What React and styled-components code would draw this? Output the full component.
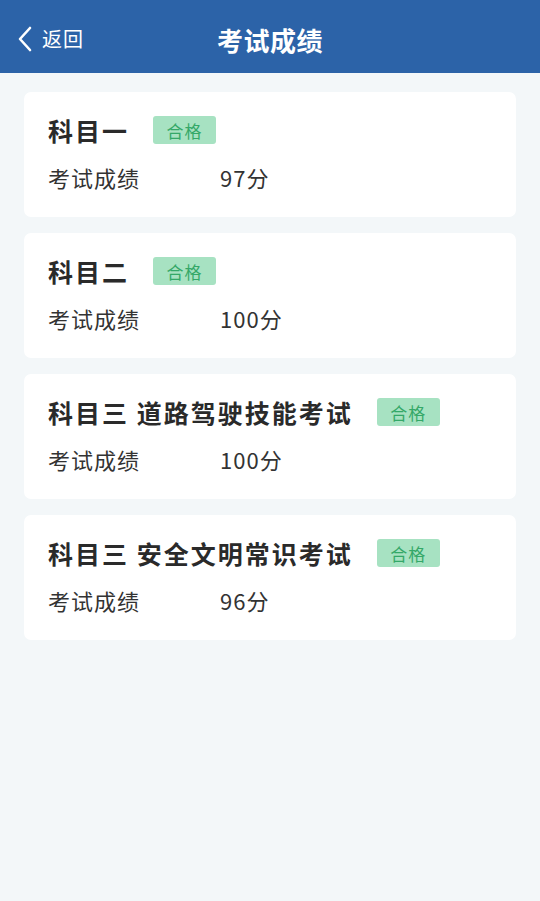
import React from "react";
import styled, { createGlobalStyle } from "styled-components";

const Global = createGlobalStyle`
  html, body { margin: 0; padding: 0; background: #f3f7f9; }
  body { font-family: "Noto Sans CJK SC", "Noto Sans", sans-serif; }
  * { box-sizing: border-box; }
`;

const Page = styled.div`
  width: 540px;
  min-height: 901px;
  background: #f3f7f9;
`;

const Header = styled.header`
  height: 73px;
  padding-top: 5px;
  background: #2c63a8;
  display: grid;
  grid-template-columns: 1fr auto 1fr;
  align-items: center;
  color: #fff;
`;

const Back = styled.div`
  display: flex;
  align-items: center;
  gap: 9px;
  padding-left: 17px;
  font-size: 20px;
  line-height: 1;
  letter-spacing: 1px;
`;

const Title = styled.h1`
  margin: 0;
  font-size: 26px;
  font-weight: 700;
  letter-spacing: 0.5px;
`;

const List = styled.main`
  display: flex;
  flex-direction: column;
  gap: 16px;
  padding: 19px 24px;
`;

const Card = styled.section`
  background: #fff;
  border-radius: 7px;
  height: 125px;
  padding: 20px 24px 0;
  display: flex;
  flex-direction: column;
  gap: 14px;
`;

const TitleRow = styled.div`
  display: flex;
  align-items: center;
  height: 36px;
  gap: 24px;
`;

const Subject = styled.div`
  font-size: 25px;
  font-weight: 700;
  color: #2a2a2a;
  letter-spacing: 2px;
`;

const Badge = styled.span`
  display: inline-flex;
  align-items: center;
  justify-content: center;
  width: 63px;
  height: 28px;
  border-radius: 3px;
  background: #a7e2c2;
  color: #34a868;
  font-size: 17px;
  letter-spacing: 1px;
`;

const InfoRow = styled.div`
  display: flex;
  align-items: center;
  font-size: 22px;
  letter-spacing: 1px;
  color: #333;
  height: 30px;
`;

const Label = styled.span`
  width: 172px;
`;

const Value = styled.span``;

const data = [
  { name: "科目一", score: "97分" },
  { name: "科目二", score: "100分" },
  { name: "科目三 道路驾驶技能考试", score: "100分" },
  { name: "科目三 安全文明常识考试", score: "96分" },
];

export default function App() {
  return (
    <Page>
      <Global />
      <Header>
        <Back>
          <svg width="16" height="26" viewBox="0 0 16 26" fill="none">
            <path d="M13 2 L3 13 L13 24" stroke="#fff" strokeWidth="2.6" strokeLinecap="round" strokeLinejoin="round" />
          </svg>
          <span>返回</span>
        </Back>
        <Title>考试成绩</Title>
        <div />
      </Header>
      <List>
        {data.map((d) => (
          <Card key={d.name}>
            <TitleRow>
              <Subject>{d.name}</Subject>
              <Badge>合格</Badge>
            </TitleRow>
            <InfoRow>
              <Label>考试成绩</Label>
              <Value>{d.score}</Value>
            </InfoRow>
          </Card>
        ))}
      </List>
    </Page>
  );
}
